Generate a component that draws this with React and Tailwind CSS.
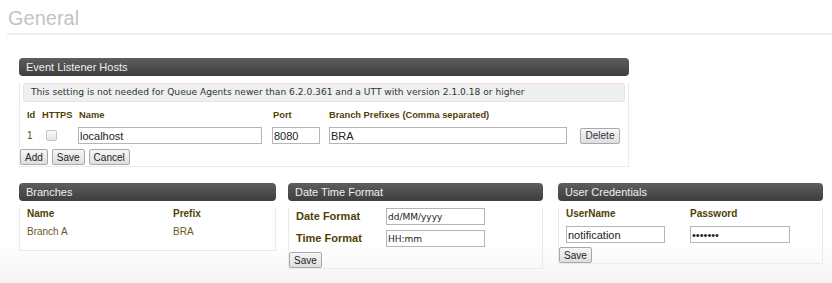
import React from "react";

const F = { fontFamily: '"Liberation Sans", Arial, sans-serif' };

function Header({ children }) {
  return (
    <div className="h-[18px] rounded-[4px] bg-gradient-to-b from-[#5e5e5e] to-[#3e3e3e] pl-[7px] text-[11px] leading-[18px] text-[#f0f0f0]">
      {children}
    </div>
  );
}

function Btn({ children, className = "" }) {
  return (
    <button
      className={
        "h-[16px] rounded-[2px] border border-[#a9a9a9] bg-gradient-to-b from-[#f6f6f6] to-[#dedede] px-[4px] text-[10px] leading-[13px] text-[#222] " +
        className
      }
    >
      {children}
    </button>
  );
}

function Input({ value, className = "", mono = false, type = "text" }) {
  return (
    <input
      readOnly
      type={type}
      value={value}
      className={
        "h-[17px] border border-[#b5b5b5] bg-white px-[1px] text-[11px] text-[#222] outline-none " +
        className
      }
      style={mono ? { fontFamily: '"DejaVu Sans", Verdana, sans-serif', fontSize: "9px" } : F}
    />
  );
}

const lab = "font-bold text-[#4f3f06]";
const val = "text-[#6b5a23]";

export default function App() {
  return (
    <div
      style={F}
      className="h-[283px] w-[832px] overflow-hidden bg-gradient-to-b from-white from-[86%] to-[#f4f4f4]"
    >
      <div className="ml-[7px] border-b-2 border-[#efefef] pb-[3px] pl-[1px] pt-[7px] text-[20px] leading-[23px] text-[#c3c3c3]">
        General
      </div>

      {/* Event Listener Hosts */}
      <div className="ml-[19px] mt-[23px] w-[610px]">
        <Header>Event Listener Hosts</Header>
        <div className="border border-t-0 border-[#ebebeb] pb-[1px]">
          <div
            className="mx-[3px] mt-[7px] h-[19px] rounded-[3px] border border-[#f5dcdc] bg-[#eeeff1] pl-[7px] text-[9.1px] leading-[17px] text-[#333]"
            style={{ fontFamily: '"DejaVu Sans", Verdana, sans-serif' }}
          >
            This setting is not needed for Queue Agents newer than 6.2.0.361 and a UTT with version 2.1.0.18 or higher
          </div>
          <div className={"mt-[7px] flex h-[14px] items-center text-[9.3px] " + lab}>
            <span className="ml-[7px] w-[15px]">Id</span>
            <span className="w-[37px]">HTTPS</span>
            <span className="w-[194px]">Name</span>
            <span className="w-[56px]">Port</span>
            <span>Branch Prefixes (Comma separated)</span>
          </div>
          <div className="mt-[4px] flex h-[17px] items-center">
            <span className="ml-[7px] w-[18px] text-[10px] text-[#4f3f06]">1</span>
            <span className="ml-[1px] mr-[21px] h-[11px] w-[11px] rounded-[2px] border border-[#c6c6c6] bg-gradient-to-b from-[#fafafa] to-[#e6e6e6]" />
            <Input value="localhost" className="w-[184px]" />
            <Input value="8080" className="ml-[10px] w-[48px]" />
            <Input value="BRA" className="ml-[9px] w-[238px]" />
            <Btn className="ml-[13px] w-[40px] text-[#334]">Delete</Btn>
          </div>
          <div className="mt-[5px] flex gap-[4px]">
            <Btn>Add</Btn>
            <Btn>Save</Btn>
            <Btn>Cancel</Btn>
          </div>
        </div>
      </div>

      {/* Bottom row */}
      <div className="mt-[16px] flex items-start">
        {/* Branches */}
        <div className="ml-[19px] w-[257px]">
          <Header>Branches</Header>
          <div className="h-[43px] border border-t-0 border-[#ebebeb]">
            <div className={"mt-[7px] flex text-[10px] leading-[12px] " + lab}>
              <span className="ml-[7px] w-[146px]">Name</span>
              <span>Prefix</span>
            </div>
            <div className={"mt-[6px] flex text-[10px] leading-[12px] " + val}>
              <span className="ml-[7px] w-[146px]">Branch A</span>
              <span>BRA</span>
            </div>
          </div>
        </div>

        {/* Date Time Format */}
        <div className="ml-[12px] w-[255px]">
          <Header>Date Time Format</Header>
          <div className="border border-t-0 border-[#ebebeb]">
            <div className="mt-[7px] flex items-center">
              <span className={"ml-[7px] w-[90px] text-[11px] " + lab}>Date Format</span>
              <Input value="dd/MM/yyyy" mono className="w-[99px]" />
            </div>
            <div className="mt-[5px] flex items-center">
              <span className={"ml-[7px] w-[90px] text-[11px] " + lab}>Time Format</span>
              <Input value="HH:mm" mono className="w-[99px]" />
            </div>
            <div className="mt-[5px] flex">
              <Btn>Save</Btn>
            </div>
          </div>
        </div>

        {/* User Credentials */}
        <div className="ml-[15px] w-[265px]">
          <Header>User Credentials</Header>
          <div className="border border-t-0 border-[#ebebeb]">
            <div className={"mt-[7px] flex text-[10px] leading-[12px] " + lab}>
              <span className="ml-[7px] w-[124px]">UserName</span>
              <span>Password</span>
            </div>
            <div className="mt-[6px] flex items-center">
              <Input value="notification" className="ml-[7px] w-[99px]" />
              <Input value="1234567" type="password" className="ml-[25px] w-[100px]" />
            </div>
            <div className="mt-[4px] flex">
              <Btn>Save</Btn>
            </div>
          </div>
        </div>
      </div>
    </div>
  );
}
